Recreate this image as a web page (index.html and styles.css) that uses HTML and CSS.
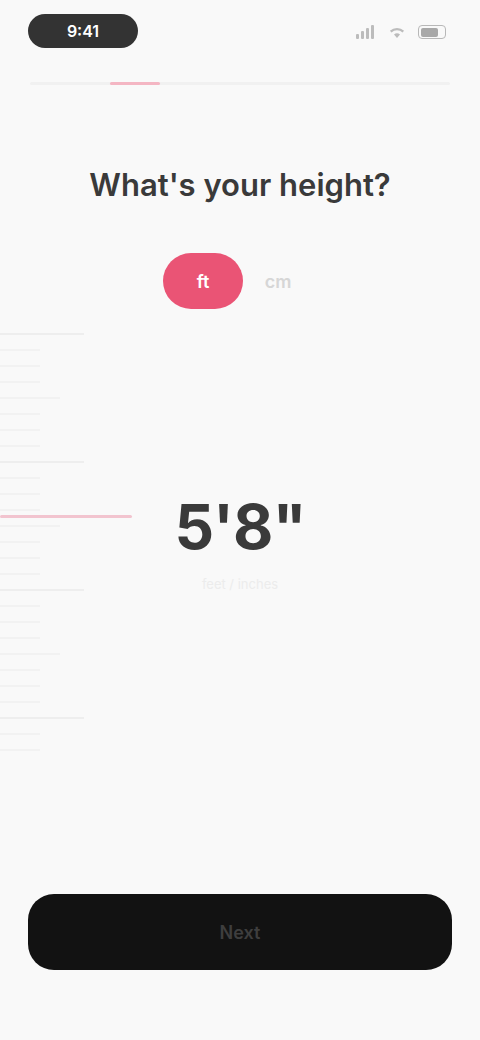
FILE: index.html
```html
<!DOCTYPE html>
<html>
<head>
<meta charset="utf-8">
<link rel="stylesheet" href="styles.css">
</head>
<body>
<div class="screen">
  <div class="status">
    <div class="time-pill">9:41</div>
    <div class="status-icons">
      <svg width="20" height="14" viewBox="0 0 20 14"><rect x="0" y="9" width="3" height="5" rx="1" fill="#bcbcbc"/><rect x="5" y="6" width="3" height="8" rx="1" fill="#bcbcbc"/><rect x="10" y="3" width="3" height="11" rx="1" fill="#bcbcbc"/><rect x="15" y="0" width="3" height="14" rx="1" fill="#bcbcbc"/></svg>
      <svg width="18" height="14" viewBox="0 0 18 14"><path d="M9 13l3-3.5a4.5 4.5 0 0 0-6 0z M3.5 7.5a8 8 0 0 1 11 0l1.6-1.8a10.5 10.5 0 0 0-14.2 0z" fill="#bcbcbc"/></svg>
      <div class="battery"><div class="battery-fill"></div></div>
    </div>
  </div>
  <div class="progress"><div class="progress-fill"></div></div>

  <h1 class="title">What's your height?</h1>

  <div class="toggle">
    <div class="seg active">ft</div>
    <div class="seg">cm</div>
  </div>

  <div class="picker">
    <div class="ruler">
      <div class="tick long"></div><div class="tick"></div><div class="tick"></div><div class="tick"></div><div class="tick mid"></div><div class="tick"></div><div class="tick"></div><div class="tick"></div>
      <div class="tick long"></div><div class="tick"></div><div class="tick"></div><div class="tick"></div><div class="tick mid"></div><div class="tick"></div><div class="tick"></div><div class="tick"></div>
      <div class="tick long"></div><div class="tick"></div><div class="tick"></div><div class="tick"></div><div class="tick mid"></div><div class="tick"></div><div class="tick"></div><div class="tick"></div>
      <div class="tick long"></div><div class="tick"></div><div class="tick"></div>
    </div>
    <div class="indicator"></div>
    <div class="value-box">
      <div class="value">5'8"</div>
      <div class="unit">feet / inches</div>
    </div>
  </div>

  <div class="footer">
    <button class="next">Next</button>
  </div>
</div>
</body>
</html>
```

FILE: styles.css
```css
html, body {
  margin: 0;
  padding: 0;
  background: #f9f9f9;
}
body {
  font-family: Inter, "Noto Sans", "Liberation Sans", sans-serif;
  color: #1a1a1a;
}
.screen {
  width: 480px;
  height: 1040px;
  display: flex;
  flex-direction: column;
  overflow: hidden;
}
.status {
  height: 34px;
  padding: 14px 34px 0 28px;
  display: flex;
  justify-content: space-between;
  align-items: center;
}
.time-pill {
  width: 110px;
  height: 34px;
  border-radius: 17px;
  background: #333333;
  color: #ffffff;
  font-size: 16px;
  font-weight: 600;
  display: flex;
  align-items: center;
  justify-content: center;
}
.status-icons {
  display: flex;
  align-items: center;
  gap: 12px;
  padding-top: 2px;
}
.battery {
  width: 28px;
  height: 14px;
  border: 1.5px solid #b8b8b8;
  border-radius: 4px;
  padding: 1.5px;
  box-sizing: border-box;
}
.battery-fill {
  width: 75%;
  height: 100%;
  background: #a8a8a8;
  border-radius: 2px;
}
.progress {
  margin: 34px 30px 0 30px;
  height: 3px;
  background: #f1f1f1;
  border-radius: 2px;
}
.progress-fill {
  width: 50px;
  margin-left: 80px;
  height: 3px;
  background: #f4b6c3;
  border-radius: 2px;
}
.title {
  margin: 80px 0 0 0;
  text-align: center;
  font-size: 31px;
  font-weight: 600;
  color: #3a3a3a;
  line-height: 40px;
}
.toggle {
  margin: 48px auto 0 auto;
  display: flex;
  align-items: center;
  padding-left: 0;
  padding-right: 4px;
}
.seg {
  width: 70px;
  height: 56px;
  border-radius: 28px;
  display: flex;
  align-items: center;
  justify-content: center;
  font-size: 18px;
  font-weight: 600;
  color: #d6d6d6;
}
.seg.active {
  width: 80px;
  background: #ea5475;
  color: #ffffff;
}
.picker {
  position: relative;
  height: 460px;
  margin-top: 16px;
  display: flex;
  align-items: center;
  justify-content: center;
}
.ruler {
  position: absolute;
  left: 0;
  top: 8px;
  display: flex;
  flex-direction: column;
  gap: 14px;
}
.tick {
  width: 40px;
  height: 2px;
  background: #f2f2f2;
}
.tick.mid { width: 60px; }
.tick.long { width: 84px; background: #eeeeee; }
.indicator {
  position: absolute;
  left: 0;
  top: 190px;
  width: 132px;
  height: 3px;
  background: #f2c4cf;
  border-radius: 2px;
}
.value-box {
  display: flex;
  flex-direction: column;
  align-items: center;
  margin-top: -26px;
}
.value {
  font-size: 62px;
  font-weight: 700;
  color: #3a3a3a;
  line-height: 70px;
  letter-spacing: -1px;
}
.unit {
  margin-top: 14px;
  font-size: 13px;
  color: #ececec;
}
.footer {
  margin-top: auto;
  padding: 0 28px 70px 28px;
}
.next {
  width: 100%;
  height: 76px;
  border: none;
  border-radius: 26px;
  background: #121212;
  color: #3e3e3e;
  font-family: Inter, "Noto Sans", "Liberation Sans", sans-serif;
  font-size: 18px;
  font-weight: 600;
}
```
